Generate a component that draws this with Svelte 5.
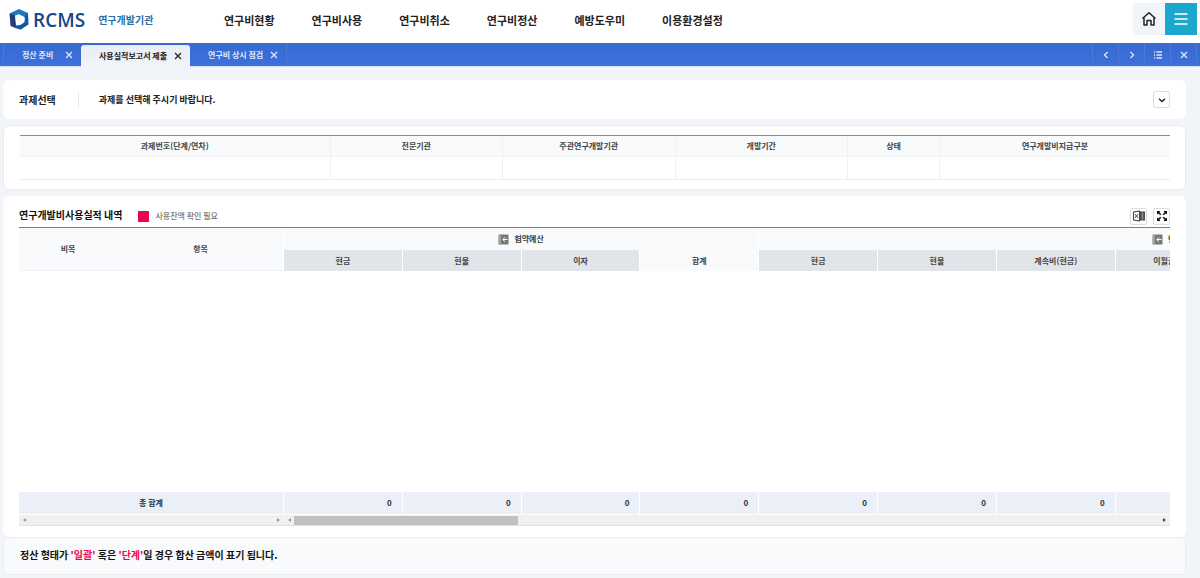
<!-- App.svelte -->
<script>
  const menus = ['연구비현황', '연구비사용', '연구비취소', '연구비정산', '예방도우미', '이용환경설정'];

  let tabs = $state([
    { id: 1, label: '정산 준비' },
    { id: 2, label: '사용실적보고서 제출' },
    { id: 3, label: '연구비 상시 점검' }
  ]);
  let activeTab = $state(2);

  const taskColumns = [
    { label: '과제번호(단계/연차)', width: 27 },
    { label: '전문기관', width: 15 },
    { label: '주관연구개발기관', width: 15 },
    { label: '개발기간', width: 15 },
    { label: '상태', width: 8 },
    { label: '연구개발비지급구분', width: 20 }
  ];

  const groups = [
    { label: '협약예산', span: 4 },
    { label: '변경예산', span: 7 }
  ];

  const columns = [
    { label: '현금' },
    { label: '현물' },
    { label: '이자' },
    { label: '합계', sum: true },
    { label: '현금' },
    { label: '현물' },
    { label: '계속비(현금)' },
    { label: '이월금(현금)' },
    { label: '' },
    { label: '' },
    { label: '' }
  ];

  function closeTab(id) {
    tabs = tabs.filter((tab) => tab.id !== id);
  }

  function moveTab(step) {
    const next = tabs[tabs.findIndex((tab) => tab.id === activeTab) + step];
    if (next) activeTab = next.id;
  }
</script>

{#snippet cross()}
  <svg class="cross" viewBox="0 0 8 8" aria-hidden="true">
    <path d="M1 1l6 6M7 1L1 7" />
  </svg>
{/snippet}

<header class="header">
  <a class="logo" href="#home">
    <svg viewBox="0 0 20 21" aria-hidden="true">
      <path fill="#1d78bd" d="M.500 4.500L10 0l9 4v7l-3.500-3L10 5.500 6 6.500z" />
      <path fill="#2b3b73" d="M.500 4.500L6.200 6l1 10.500L9 20 1.500 17z" />
      <path fill="#115aa3" d="M19 4l.500 11.500L11.500 20.800 6.500 18.500l.600-3L11 16l4.500-3V8z" />
      <path fill="#fff" d="M6.200 6.500L10 5.200l5.700 3.500-.700 4.500-4 2.800-4 .500z" />
    </svg>
    <strong>RCMS</strong>
    <span>연구개발기관</span>
  </a>
  <nav class="menu">
    {#each menus as menu}
      <a href="#menu">{menu}</a>
    {/each}
  </nav>
  <div class="header-buttons">
    <button class="home" aria-label="홈">
      <svg viewBox="0 0 16 16" aria-hidden="true">
        <path d="M1.500 7.500L8 1.700l6.500 5.800M3 6.700V14h3V9.500h4V14h3V6.700" />
      </svg>
    </button>
    <button class="all-menu" aria-label="전체메뉴">
      <svg viewBox="0 0 14 12" aria-hidden="true">
        <path d="M.500 1h13M.500 6h13M.500 11h13" />
      </svg>
    </button>
  </div>
</header>

<div class="tabbar">
  <div class="tabs">
    {#each tabs as tab (tab.id)}
      <div class="tab" class:active={tab.id === activeTab}>
        <button class="tab-label" onclick={() => (activeTab = tab.id)}>{tab.label}</button>
        <button class="tab-close" aria-label="닫기" onclick={() => closeTab(tab.id)}>
          {@render cross()}
        </button>
      </div>
    {/each}
  </div>
  <div class="tab-tools">
    <button aria-label="이전" onclick={() => moveTab(-1)}>
      <svg viewBox="0 0 8 8" aria-hidden="true"><path d="M5.500 1l-3 3 3 3" /></svg>
    </button>
    <button aria-label="다음" onclick={() => moveTab(1)}>
      <svg viewBox="0 0 8 8" aria-hidden="true"><path d="M2.500 1l3 3-3 3" /></svg>
    </button>
    <button aria-label="목록">
      <svg viewBox="0 0 8 8" aria-hidden="true">
        <path d="M0 1h1.200M0 4h1.200M0 7h1.200M2.500 1H8M2.500 4H8M2.500 7H8" />
      </svg>
    </button>
    <button aria-label="모두 닫기" onclick={() => (tabs = [])}>{@render cross()}</button>
  </div>
</div>

<main class="content">
  <section class="card task-select">
    <h2>과제선택</h2>
    <p>과제를 선택해 주시기 바랍니다.</p>
    <button class="icon-btn" aria-label="펼치기">
      <svg viewBox="0 0 12 12" aria-hidden="true"><path class="stroke" d="M3 4.700l3 2.800 3-2.800" /></svg>
    </button>
  </section>

  <section class="card task-info">
    <table class="task-table">
      <thead>
        <tr>
          {#each taskColumns as col}
            <th style="width: {col.width}%">{col.label}</th>
          {/each}
        </tr>
      </thead>
      <tbody>
        <tr>
          {#each taskColumns as _}
            <td></td>
          {/each}
        </tr>
      </tbody>
    </table>
  </section>

  <section class="card result">
    <div class="result-head">
      <h2>연구개발비사용실적 내역</h2>
      <span class="legend">사용잔액 확인 필요</span>
      <div class="result-tools">
        <button class="icon-btn" aria-label="엑셀 다운로드">
          <svg viewBox="0 0 12 12" aria-hidden="true">
            <path fill="#444" d="M0 1.500L7 .500v11l-7-1z" />
            <path fill="#fff" d="M1 2.400l5-.700v8.600l-5-.700z" />
            <path stroke="#444" d="M2 4l3 4M5 4L2 8" />
            <path fill="#444" d="M7 1.500h5v9H7z" />
            <path stroke="#aaa" stroke-width=".600" d="M7.500 4H11.500M7.500 6h4M7.500 8h4M9.500 2v8" />
          </svg>
        </button>
        <button class="icon-btn" aria-label="전체화면">
          <svg viewBox="0 0 12 12" aria-hidden="true">
            <path fill="#111" d="M1 1h3.500L3.400 2.200 5.300 4.300l-1 1L2.200 3.400 1 4.500zM11 1v3.500L9.800 3.400 7.700 5.300l-1-1 1.900-2.100L7.500 1zM1 11V7.500l1.200 1.100 2.100-1.900 1 1-1.900 2.100L4.500 11zM11 11H7.500l1.100-1.200-1.900-2.100 1-1 2.100 1.900L11 7.500z" />
          </svg>
        </button>
      </div>
    </div>

    <div class="grid">
      <div class="pane fixed">
        <table>
          <thead>
            <tr class="tall">
              <th class="item">비목</th>
              <th>항목</th>
            </tr>
          </thead>
          <tbody>
            <tr><td colspan="2"></td></tr>
          </tbody>
          <tfoot>
            <tr><td class="total-label" colspan="2">총 합계</td></tr>
          </tfoot>
        </table>
        <div class="scrollbar">
          <i class="arrow left"></i>
          <i class="arrow right"></i>
        </div>
      </div>
      <div class="pane scroll">
        <div class="viewport">
          <table>
            <thead>
              <tr class="groups">
                {#each groups as group}
                  <th colspan={group.span}>
                    <span class="group">
                      <button class="fold" aria-label="접기">
                        <svg viewBox="0 0 11 11" aria-hidden="true">
                          <rect width="11" height="11" rx="1.500" fill="#777" />
                          <path stroke="#ccc" d="M2 1v9" />
                          <path d="M9.500 5.500H5M7 3.300L4.800 5.500 7 7.700" />
                        </svg>
                      </button>
                      {group.label}
                    </span>
                  </th>
                {/each}
              </tr>
              <tr>
                {#each columns as col}
                  <th class:detail={!col.sum}>{col.label}</th>
                {/each}
              </tr>
            </thead>
            <tbody>
              <tr><td colspan={columns.length}></td></tr>
            </tbody>
            <tfoot>
              <tr>
                {#each columns as col}
                  <td>{col.label ? 0 : ''}</td>
                {/each}
              </tr>
            </tfoot>
          </table>
        </div>
        <div class="scrollbar">
          <i class="arrow left"></i>
          <i class="thumb"></i>
          <i class="arrow right dark"></i>
        </div>
      </div>
    </div>
  </section>

  <p class="note">
    정산 형태가 <em>'일괄'</em> 혹은 <em>'단계'</em>일 경우 합산 금액이 표기 됩니다.
  </p>
</main>

<style>
  :global(body) {
    background: #f1f4f9;
    color: #222;
    font-family: 'Noto Sans CJK KR', sans-serif;
    font-size: 8px;
    line-height: 12px;
  }

  button {
    display: flex;
    align-items: center;
    justify-content: center;
    padding: 0;
    border: 0;
    background: none;
    color: inherit;
    font: inherit;
    cursor: pointer;
  }

  a {
    color: inherit;
    text-decoration: none;
  }

  svg {
    display: block;
    fill: none;
  }

  h2,
  p {
    margin: 0;
  }

  h2 {
    font-size: 10px;
    font-weight: 700;
    line-height: 16px;
  }

  /* header */
  .header {
    display: flex;
    align-items: flex-start;
    height: 43px;
    padding: 0 3px 0 9px;
    box-sizing: border-box;
    background: #fff;
  }

  .logo {
    display: flex;
    align-items: center;
    width: 215px;
    height: 39px;
    color: #17448c;
  }

  .logo svg {
    width: 20px;
    height: 21px;
    margin-right: 4px;
  }

  .logo strong {
    margin-right: 13px;
    font-family: 'Open Sans', sans-serif;
    font-size: 19px;
    font-weight: 600;
    line-height: 24px;
  }

  .logo span {
    color: #2c6da8;
    font-size: 10px;
    font-weight: 700;
  }

  .menu {
    display: flex;
    flex: 1;
    gap: 37px;
    font-size: 11px;
    font-weight: 700;
    line-height: 41px;
  }

  .header-buttons {
    display: flex;
    padding-top: 3px;
  }

  .header-buttons button {
    width: 32px;
    height: 32px;
  }

  .home {
    background: #f1f4f9;
  }

  .home svg {
    width: 16px;
    height: 16px;
    stroke: #222;
    stroke-width: 1.5;
    stroke-linejoin: round;
  }

  .all-menu {
    background: #1ca8cc;
  }

  .all-menu svg {
    width: 14px;
    height: 12px;
    stroke: #fff;
    stroke-width: 1.3;
  }

  /* opened pages */
  .tabbar {
    display: flex;
    justify-content: space-between;
    height: 23px;
    padding: 0 3px;
    border-bottom: 1px solid #d3def3;
    background: linear-gradient(#386acf, #3c70dc);
    color: #fff;
  }

  .tabs {
    display: flex;
    border-left: 1px solid #4a79d8;
  }

  .tab {
    display: flex;
    align-items: center;
    justify-content: space-between;
    gap: 7px;
    min-width: 77px;
    padding: 0 8px 0 18px;
    box-sizing: border-box;
    font-weight: 700;
    color: #dfe8fa;
  }

  .tab:last-child {
    border-right: 1px solid #4a79d8;
  }

  .tab.active {
    height: 22px;
    margin-top: 2px;
    border-radius: 3px 3px 0 0;
    background: linear-gradient(#e9edf4, #f1f4f9);
    color: #222;
  }

  .tab:not(.active) {
    padding-top: 1px;
  }

  .cross {
    width: 8px;
    height: 8px;
    stroke: currentColor;
    stroke-width: 1.3;
  }

  .tab-tools {
    display: flex;
    border-right: 1px solid #4a79d8;
  }

  .tab-tools button {
    width: 26px;
    padding-top: 1px;
    border-left: 1px solid #4a79d8;
    color: #dfe8fa;
  }

  .tab-tools svg {
    width: 8px;
    height: 8px;
    stroke: currentColor;
    stroke-width: 1.3;
  }

  /* cards */
  .content {
    padding: 13px 14px 3px 3px;
  }

  .card {
    margin-bottom: 6px;
    padding: 10px 16px;
    border-radius: 6px;
    background: #fff;
  }

  .icon-btn {
    width: 17px;
    height: 17px;
    box-sizing: border-box;
    border: 1px solid #ddd;
    border-radius: 2px;
    background: #fff;
  }

  .icon-btn svg {
    width: 12px;
    height: 12px;
  }

  .icon-btn .stroke {
    stroke: #222;
    stroke-width: 1.5;
  }

  .task-select {
    display: flex;
    align-items: center;
    height: 19px;
  }

  .task-select p {
    flex: 1;
    margin-left: 22px;
    padding-left: 20px;
    border-left: 1px solid #e5e7eb;
    font-size: 9px;
    font-weight: 700;
    line-height: 16px;
  }

  .task-info {
    padding: 9px 15px 9px 16px;
    border: 1px solid #e7eaee;
  }

  table {
    width: 100%;
    border-collapse: separate;
    border-spacing: 0;
    table-layout: fixed;
  }

  th,
  td {
    padding: 0;
    box-sizing: border-box;
  }

  th {
    background: #f8fafc;
    color: #444;
    font-weight: 700;
  }

  .task-table {
    border-top: 1px solid #7f8ea6;
  }

  .task-table th {
    height: 21px;
    border-bottom: 1px solid #f1f2f4;
  }

  .task-table td {
    height: 23px;
    border-bottom: 1px solid #ebedf0;
  }

  .task-table th:not(:last-child),
  .task-table td:not(:last-child) {
    border-right: 1px solid #f0f1f4;
  }

  .result {
    margin-bottom: 0;
    padding: 9px 16px 11px;
  }

  .result-head {
    display: flex;
    align-items: center;
    height: 22px;
  }

  .result-head h2 {
    padding-bottom: 2px;
    color: #111;
  }

  .legend {
    display: flex;
    align-items: center;
    gap: 6px;
    flex: 1;
    margin-left: 16px;
    color: #777;
    font-weight: 500;
  }

  .legend::before {
    width: 11px;
    height: 11px;
    background: #f0044b;
    content: '';
  }

  .result-tools {
    display: flex;
    gap: 6px;
  }

  .grid {
    display: flex;
    border-top: 1px solid #727e96;
  }

  .pane {
    min-width: 0;
  }

  .fixed {
    flex: 0 0 265px;
  }

  .scroll {
    flex: 1;
  }

  .viewport {
    overflow: hidden;
  }

  .viewport table {
    width: 1307px;
  }

  .pane th {
    height: 21px;
    border-right: 1px solid #fff;
  }

  .pane .groups th {
    height: 22px;
  }

  .pane .tall th {
    height: 43px;
    border-bottom: 1px solid #f0f1f4;
  }

  .pane .item {
    width: 99px;
  }

  .pane .detail {
    background: #e1e4e9;
  }

  .pane tbody td {
    height: 221px;
  }

  .pane tfoot td {
    height: 22px;
    padding-right: 10px;
    border-right: 1px solid #fff;
    background: #ebf0f8;
    color: #333;
    font-weight: 700;
    text-align: right;
  }

  .pane .total-label {
    padding: 0;
    text-align: center;
  }

  .group {
    display: flex;
    align-items: center;
    justify-content: center;
    gap: 5px;
  }

  .fold svg {
    width: 11px;
    height: 11px;
    stroke: #fff;
  }

  .scrollbar {
    display: flex;
    align-items: center;
    height: 11px;
    margin-top: 1px;
    padding: 0 4px;
    border-bottom: 1px solid #e2e2e2;
    box-sizing: border-box;
    background: #f0f0f0;
  }

  .thumb {
    width: 25.5%;
    height: 9px;
    margin-left: 3px;
    background: #c1c1c1;
  }

  .arrow {
    border: 2px solid transparent;
  }

  .arrow.left {
    border-left: 0;
    border-right: 3px solid #999;
  }

  .arrow.right {
    margin-left: auto;
    border-right: 0;
    border-left: 3px solid #999;
  }

  .arrow.dark {
    border-left-color: #444;
  }

  .note {
    padding: 9px 16px 11px;
    border: 1px solid #ebedf0;
    border-radius: 4px;
    background: #f8fafc;
    color: #111;
    font-size: 10px;
    font-weight: 700;
    line-height: 16px;
  }

  .note em {
    color: #f0044b;
    font-style: normal;
  }
</style>
